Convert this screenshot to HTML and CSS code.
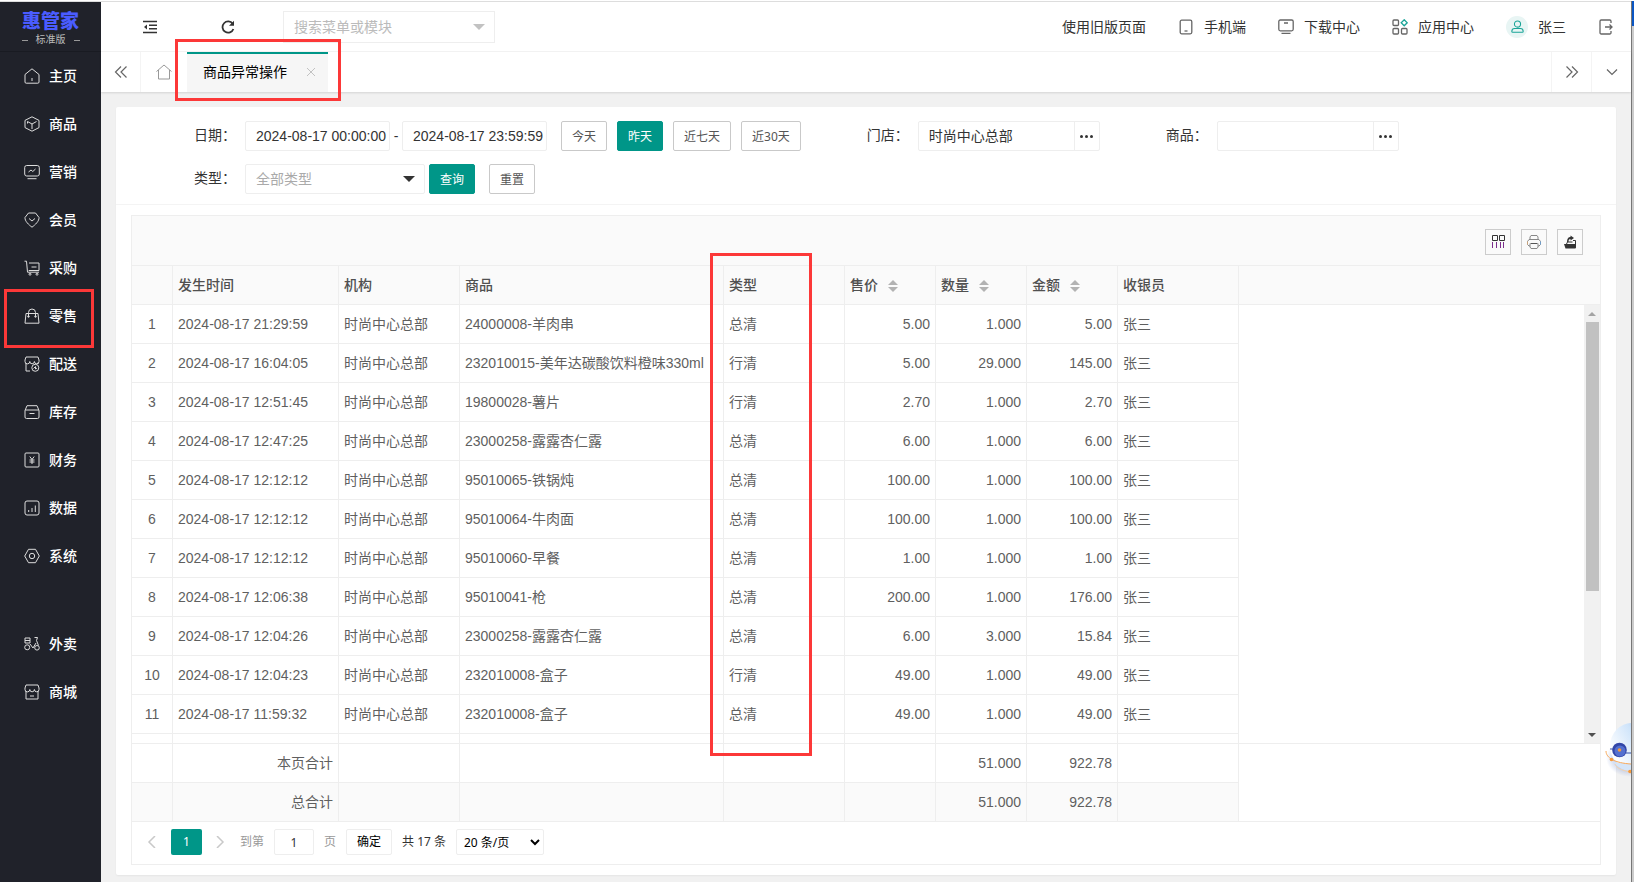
FILE: index.html
```html
<!DOCTYPE html>
<html lang="zh-CN">
<head>
<meta charset="utf-8">
<title>商品异常操作</title>
<link rel="stylesheet" href="styles.css">
</head>
<body>
<div class="app">
  <aside class="side">
    <div class="logo"><strong>惠管家</strong><span class="edition">标准版</span></div>
    <nav class="menu">
      <a href="#"><svg viewBox="0 0 16 16"><path d="M1 6.500 8 .8l7 5.700V14a1.200 1.200 0 0 1-1.200 1.200H2.200A1.200 1.200 0 0 1 1 14zM8 10v3"/></svg>主页</a>
      <a href="#"><svg viewBox="0 0 16 16"><path d="M8 .8 15 4.400v7.200L8 15.200 1 11.600V4.400zM3.500 5.500 8 8l4.500-2.500M8 8v5M3.500 5.500v2"/></svg>商品</a>
      <a href="#"><svg viewBox="0 0 16 16"><rect x=".7" y="1.500" width="14.600" height="10.500" rx="2"/><path d="m4.500 8 2.500-2 1.800 1.500L11.500 5M3.500 14.700h9"/></svg>营销</a>
      <a href="#"><svg viewBox="0 0 16 16"><path d="M4.500 1h7L15 5.500c.4 3.500-4 7.500-7 9.700C5 13 .6 9 1 5.500zM5 6.500 8 9l3-2.500"/></svg>会员</a>
      <a href="#"><svg viewBox="0 0 16 16"><path d="M.5 1.200h2l1 11h11.500M5 3h10v7.500H4.700M7.500 7h5"/><circle cx="6" cy="14.200" r="1"/><circle cx="13" cy="14.200" r="1"/></svg>采购</a>
      <a href="#" class="marked"><svg viewBox="0 0 16 16"><path d="M2 5.500h12l1 9.700H1zM4.500 9V4.500a3.500 3.500 0 0 1 7 0V9"/><circle cx="4.500" cy="8.500" r=".8"/><circle cx="11.500" cy="8.500" r=".8"/></svg>零售<span class="callout callout-menu"></span></a>
      <a href="#"><svg viewBox="0 0 16 16"><path d="M6 15H2V7M14 6.500v1.500M1 4l1-3h12l1 3v1.500a2.300 2.300 0 0 1-4.600 0 2.300 2.300 0 0 1-4.600 0A2.300 2.300 0 0 1 1 5.500z"/><circle cx="11.300" cy="11.800" r="3.500"/><path d="m9.500 12.500 2-2v2.500l1.500-1"/></svg>配送</a>
      <a href="#"><svg viewBox="0 0 16 16"><path d="M1 6.500 3 1.700h10l2 4.800v6.500a1.500 1.500 0 0 1-1.500 1.500h-11A1.500 1.500 0 0 1 1 13zM1 6h14M5.500 9.500h5"/></svg>库存</a>
      <a href="#"><svg viewBox="0 0 16 16"><rect x="1" y="1" width="14" height="14" rx="1"/><path d="m5.800 4.500 2.200 3 2.200-3M5.500 8h5M5.500 10h5M8 7.500v4.500"/></svg>财务</a>
      <a href="#"><svg viewBox="0 0 16 16"><rect x="1" y="1" width="14" height="14" rx="2"/><path d="M4.700 12v-2M8 12V8M11.300 12V5.500"/></svg>数据</a>
      <a href="#"><svg viewBox="0 0 16 16"><path d="M4.500 1.300h7L15.300 8l-3.800 6.700h-7L.7 8z"/><circle cx="8" cy="8" r="2.700"/></svg>系统</a>
      <a href="#" class="apart"><svg viewBox="0 0 16 16"><path d="M1 2h5v5H1zM1 4.500h5M10.500 1.500h3l-1 3 2 5M6 8l3 4 3-5"/><circle cx="3.200" cy="11.300" r="2.500"/><circle cx="13" cy="11.800" r="2.300"/></svg>外卖</a>
      <a href="#"><svg viewBox="0 0 16 16"><path d="M2 7v8h12V7M1 4l1-3h12l1 3v1.500a2.300 2.300 0 0 1-4.600 0 2.300 2.300 0 0 1-4.600 0A2.300 2.300 0 0 1 1 5.500zM6 12h4"/></svg>商城</a>
    </nav>
  </aside>

  <div class="page">
    <header class="top">
      <button class="plain fold" aria-label="收起菜单"><svg class="dark" viewBox="0 0 14 14"><path d="M0 1.500h14M6 5.200h8M6 8.800h8M0 12.500h14"/><path class="solid" d="M4 4.500v5L1 7z"/></svg></button>
      <button class="plain reload" aria-label="刷新"><svg class="dark" viewBox="0 0 14 14"><path stroke-width="1.800" d="M11.700 3.800A5.600 5.600 0 1 0 12.400 9"/><path class="solid" d="M13 .8v5H8z"/></svg></button>
      <label class="combo search"><input type="text" placeholder="搜索菜单或模块" aria-label="搜索菜单或模块"></label>
      <nav class="links">
        <a href="#">使用旧版页面</a>
        <a href="#"><svg class="line" viewBox="0 0 16 16"><rect x="2.200" y="1.200" width="11.600" height="13.600" rx="1.500"/><path d="M6.500 12h3"/></svg>手机端</a>
        <a href="#"><svg class="line" viewBox="0 0 16 16"><rect x=".8" y="1" width="14.400" height="10.800" rx="1.500"/><path d="M6 4h4M3.500 14.300h9"/></svg>下载中心</a>
        <a href="#"><svg class="line" viewBox="0 0 16 16"><rect x="1" y="1" width="5.500" height="5.500" rx="1"/><rect x="1" y="9.500" width="5.500" height="5.500" rx="1"/><rect x="9.500" y="9.500" width="5.500" height="5.500" rx="1"/><path class="teal" d="m12.200.8 3 3-3 3-3-3z"/></svg>应用中心</a>
        <a href="#" class="user"><span class="avatar"><svg class="line" viewBox="0 0 16 16"><g class="teal"><circle cx="8" cy="5" r="3.800"/><path d="M4.500 10.500h7c2.500 0 3.500 1.500 3.500 3.500 0 .7-.4 1-1 1H2c-.6 0-1-.3-1-1 0-2 1-3.500 3.500-3.500z"/></g></svg></span>张三</a>
        <a href="#" aria-label="退出"><svg class="line" viewBox="0 0 16 16"><path d="M13 4V2.200A1.200 1.200 0 0 0 11.800 1H3.200A1.200 1.200 0 0 0 2 2.200v11.600A1.200 1.200 0 0 0 3.200 15h8.600a1.200 1.200 0 0 0 1.200-1.200V12M7 8h7M11.500 5.500 14 8l-2.500 2.500"/></svg></a>
      </nav>
    </header>

    <div class="tabs">
      <button class="plain tab-prev" aria-label="向左"><svg class="line" viewBox="0 0 14 14"><path d="M7 1.500 1.500 7 7 12.500M12.500 1.500 7 7l5.500 5.500"/></svg></button>
      <a href="#" class="tab-home" aria-label="主页"><svg class="pale" viewBox="0 0 16 16"><path d="M.5 7.500 8 1l7.500 6.500M2.500 6v9h11V6"/></svg></a>
      <div class="tab"><a href="#">商品异常操作</a><button class="plain tab-close" aria-label="关闭"><svg viewBox="0 0 8 8"><path d="m0 0 8 8M8 0 0 8"/></svg></button><span class="callout callout-tab"></span></div>
      <button class="plain tab-next" aria-label="向右"><svg class="line" viewBox="0 0 14 14"><path d="M1.500 1.500 7 7l-5.500 5.500M7 1.500 12.500 7 7 12.500"/></svg></button>
      <button class="plain tab-more" aria-label="更多"><svg class="line" viewBox="0 0 14 14"><path d="M2 4.500 7 9.500l5-5"/></svg></button>
    </div>

    <main class="card">
      <form class="filters">
        <div class="row">
          <div class="field">
            <label for="from">日期：</label>
            <input id="from" class="date" type="text" value="2024-08-17 00:00:00">
            <span class="dash">-</span>
            <input class="date" type="text" value="2024-08-17 23:59:59" aria-label="结束日期">
            <div class="quick">
              <button type="button" class="btn">今天</button>
              <button type="button" class="btn primary">昨天</button>
              <button type="button" class="btn">近七天</button>
              <button type="button" class="btn">近30天</button>
            </div>
          </div>
          <div class="field">
            <label for="shop">门店：</label>
            <div class="picker"><input id="shop" type="text" value="时尚中心总部"><button type="button" aria-label="选择门店"><i></i><i></i><i></i></button></div>
          </div>
          <div class="field">
            <label for="goods">商品：</label>
            <div class="picker"><input id="goods" type="text"><button type="button" aria-label="选择商品"><i></i><i></i><i></i></button></div>
          </div>
        </div>
        <div class="row">
          <div class="field">
            <label for="kind">类型：</label>
            <span class="combo kind"><select id="kind"><option>全部类型</option></select></span>
            <button type="button" class="btn primary query">查询</button>
            <button type="reset" class="btn reset">重置</button>
          </div>
        </div>
      </form>

      <section class="sheet">
        <div class="tools">
          <button aria-label="筛选列"><svg viewBox="0 0 16 16"><path stroke="#333" d="M2.500 1.500h5v5h-5zM9.500 1.500h5v5h-5z"/><path stroke="#7b2d8b" d="M2.500 8v6M6.500 8v6M10.500 8v6M13.500 8v6"/></svg></button>
          <button aria-label="打印"><svg viewBox="0 0 16 16"><path stroke="#888" d="M4 5.500V3l1-1.500h6L12 3v2.500M4 12H3l-1.500-1.500v-3L3 5.500h10l1.500 2v3L13 12h-1"/><path stroke="#c9a37a" d="M1.500 7.500v3"/><path stroke="#6f9cc9" d="M14.500 7.500v3"/><path stroke="#555" d="M4.500 9.500h7"/><path stroke="#888" d="M4 9.500V13l1 1.500h6l1-1.500V9.500"/></svg></button>
          <button aria-label="导出"><svg viewBox="0 0 16 16"><path fill="#333" stroke="none" d="M2 10h12v3.500a1 1 0 0 1-1 1H3.500zM5 8C5 5 6 3 8.500 3V1.500L12 4 8.500 6.500V5C7 5 6.500 6 6.500 8z"/><path stroke="#333" d="M11 6.500h2.500V11M4.500 10l1-2h5"/></svg></button>
        </div>
        <div class="head">
          <table class="grid">
            <colgroup><col class="c-no"><col class="c-time"><col class="c-org"><col class="c-goods"><col class="c-kind"><col class="c-num"><col class="c-num"><col class="c-num"><col class="c-cashier"></colgroup>
            <thead><tr><th></th><th>发生时间</th><th>机构</th><th>商品</th><th>类型</th><th>售价<span class="sort"></span></th><th>数量<span class="sort"></span></th><th>金额<span class="sort"></span></th><th>收银员</th></tr></thead>
          </table>
        </div>
        <div class="body">
          <div class="rows">
          <table class="grid">
            <colgroup><col class="c-no"><col class="c-time"><col class="c-org"><col class="c-goods"><col class="c-kind"><col class="c-num"><col class="c-num"><col class="c-num"><col class="c-cashier"></colgroup>
            <tbody>
              <tr><td>1</td><td>2024-08-17 21:29:59</td><td>时尚中心总部</td><td>24000008-羊肉串</td><td>总清</td><td>5.00</td><td>1.000</td><td>5.00</td><td>张三</td></tr>
              <tr><td>2</td><td>2024-08-17 16:04:05</td><td>时尚中心总部</td><td>232010015-美年达碳酸饮料橙味330ml</td><td>行清</td><td>5.00</td><td>29.000</td><td>145.00</td><td>张三</td></tr>
              <tr><td>3</td><td>2024-08-17 12:51:45</td><td>时尚中心总部</td><td>19800028-薯片</td><td>行清</td><td>2.70</td><td>1.000</td><td>2.70</td><td>张三</td></tr>
              <tr><td>4</td><td>2024-08-17 12:47:25</td><td>时尚中心总部</td><td>23000258-露露杏仁露</td><td>总清</td><td>6.00</td><td>1.000</td><td>6.00</td><td>张三</td></tr>
              <tr><td>5</td><td>2024-08-17 12:12:12</td><td>时尚中心总部</td><td>95010065-铁锅炖</td><td>总清</td><td>100.00</td><td>1.000</td><td>100.00</td><td>张三</td></tr>
              <tr><td>6</td><td>2024-08-17 12:12:12</td><td>时尚中心总部</td><td>95010064-牛肉面</td><td>总清</td><td>100.00</td><td>1.000</td><td>100.00</td><td>张三</td></tr>
              <tr><td>7</td><td>2024-08-17 12:12:12</td><td>时尚中心总部</td><td>95010060-早餐</td><td>总清</td><td>1.00</td><td>1.000</td><td>1.00</td><td>张三</td></tr>
              <tr><td>8</td><td>2024-08-17 12:06:38</td><td>时尚中心总部</td><td>95010041-枪</td><td>总清</td><td>200.00</td><td>1.000</td><td>176.00</td><td>张三</td></tr>
              <tr><td>9</td><td>2024-08-17 12:04:26</td><td>时尚中心总部</td><td>23000258-露露杏仁露</td><td>总清</td><td>6.00</td><td>3.000</td><td>15.84</td><td>张三</td></tr>
              <tr><td>10</td><td>2024-08-17 12:04:23</td><td>时尚中心总部</td><td>232010008-盒子</td><td>行清</td><td>49.00</td><td>1.000</td><td>49.00</td><td>张三</td></tr>
              <tr><td>11</td><td>2024-08-17 11:59:32</td><td>时尚中心总部</td><td>232010008-盒子</td><td>总清</td><td>49.00</td><td>1.000</td><td>49.00</td><td>张三</td></tr>
              <tr><td></td><td></td><td></td><td></td><td></td><td></td><td></td><td></td><td></td></tr>
            </tbody>
          </table>
          </div>
          <div class="bar"><span class="up"></span><span class="thumb"></span><span class="rest"></span><span class="down"></span></div>
        </div>
        <div class="totals">
          <table class="grid">
            <colgroup><col class="c-no"><col class="c-time"><col class="c-org"><col class="c-goods"><col class="c-kind"><col class="c-num"><col class="c-num"><col class="c-num"><col class="c-cashier"></colgroup>
            <tbody>
              <tr><td></td><td>本页合计</td><td></td><td></td><td></td><td></td><td>51.000</td><td>922.78</td><td></td></tr>
              <tr><td></td><td>总合计</td><td></td><td></td><td></td><td></td><td>51.000</td><td>922.78</td><td></td></tr>
            </tbody>
          </table>
        </div>
        <div class="pager">
          <button class="plain" aria-label="上一页"><svg viewBox="0 0 12 12"><path d="M9 0 3 6l6 6"/></svg></button>
          <button class="current">1</button>
          <button class="plain" aria-label="下一页"><svg viewBox="0 0 12 12"><path d="m3 0 6 6-6 6"/></svg></button>
          <label for="goto">到第</label>
          <input id="goto" type="text" value="1">
          <span class="unit">页</span>
          <button class="ok">确定</button>
          <span class="count">共 17 条</span>
          <select aria-label="每页条数"><option>20 条/页</option></select>
        </div>
        <span class="callout callout-kind"></span>
      </section>
    </main>

    <svg class="robot" viewBox="0 0 28 60">
      <defs>
        <linearGradient id="shell" x1="1" y1="0" x2="0" y2=".6"><stop offset="0" stop-color="#7fb2ee"/><stop offset=".45" stop-color="#cfe4fa"/><stop offset="1" stop-color="#fff"/></linearGradient>
        <radialGradient id="shade"><stop offset=".6" stop-color="#8fa5d8" stop-opacity=".5"/><stop offset="1" stop-color="#8fa5d8" stop-opacity="0"/></radialGradient>
      </defs>
      <ellipse cx="27" cy="40" rx="24" ry="19" fill="url(#shade)"/>
      <ellipse cx="29" cy="28" rx="22" ry="23" fill="url(#shell)"/>
      <path d="M10 44q8 9 18 9v-7z" fill="#d5e5f8"/>
      <path d="M7 31h3M23 35h5" fill="none" stroke="#3450a8"/>
      <circle cx="16.500" cy="32" r="7.300" fill="#3246a8"/>
      <circle cx="17" cy="33" r="5.500" fill="#5470cf"/>
      <circle cx="16.500" cy="32" r="1.800" fill="#f79b3c"/>
      <path d="M3 33c0 7 9 12 25 13" fill="none" stroke="#f8a95a"/>
      <path d="M12 46c1 4 8 7 16 8" fill="none" stroke="#f3d3b0"/>
      <circle cx="8.500" cy="41.500" r="1.800" fill="#f79b3c"/><circle cx="27" cy="53.500" r="1.800" fill="#f79b3c"/>
    </svg>
  </div>
  <div class="edge"></div>
</div>
</body>
</html>
```
FILE: styles.css
```css
* { box-sizing: border-box; }

body {
  margin: 0;
  color: #333;
  background: #f1f1f1;
  font: 14px/20px "Liberation Sans", "Noto Sans CJK SC", sans-serif;
}

a { color: inherit; text-decoration: none; }
button, input, select { font: inherit; color: inherit; margin: 0; padding: 0; }
input { min-width: 0; outline: none; }
svg { display: block; flex: none; width: 16px; height: 16px; fill: none; stroke: currentColor; }
.plain { display: flex; align-items: center; justify-content: center; border: 0; background: none; }

.app {
  display: grid;
  grid-template-columns: 101px minmax(0, 1fr) 3px;
  grid-template-rows: minmax(0, 1fr);
  height: 100vh;
  min-height: 720px;
  border-top: 1px solid #fff;
}

/* Sidebar */
.side { border-top: 1px solid #ddd; background: #20222a; color: #fff; }
.logo {
  display: flex;
  flex-direction: column;
  align-items: center;
  height: 50px;
  padding-top: 9px;
  border-bottom: 1px solid #191b22;
}
.logo strong { color: #4a5cff; font-size: 19px; line-height: 22px; font-weight: 900; }
.edition { display: flex; align-items: center; gap: 8px; color: #bbb; font-size: 10px; line-height: 14px; }
.edition::before, .edition::after { content: ""; width: 6px; height: 1px; background: #999; }
.menu a {
  position: relative;
  display: flex;
  align-items: center;
  gap: 9px;
  height: 48px;
  padding-left: 24px;
  font-weight: 500;
}
.menu .apart { margin-top: 40px; }
.menu svg { stroke: #ddd; }

/* Annotation frames */
.callout { position: absolute; border: 3px solid #fc3838; pointer-events: none; z-index: 2; }
.callout-menu { inset: -3px 7px -8px 4px; }
.callout-tab { inset: -15px -13px -9px -12px; }
.callout-kind { top: 37px; bottom: 108px; left: 578px; width: 102px; }

/* Header */
.page { position: relative; display: flex; flex-direction: column; min-width: 0; border-top: 1px solid #ddd; }
.top { display: flex; align-items: center; flex: none; height: 50px; padding: 0 17px 0 41px; background: #fff; border-bottom: 1px solid #f4f4f4; }
.top .plain svg { width: 14px; height: 14px; }
.dark { stroke: #333; stroke-width: 1.4px; }
.solid { fill: #333; stroke: none; }
.fold { width: 16px; }
.reload { width: 16px; margin-left: 62px; }
.search { width: 212px; margin-left: 47px; }
.combo { position: relative; display: block; }
.combo::after {
  content: "";
  position: absolute;
  top: 13px;
  right: 10px;
  border: 6px solid transparent;
  border-top-color: #c2c2c2;
  border-bottom: 0;
  pointer-events: none;
}
.search input { display: block; width: 100%; height: 32px; padding: 0 10px; border: 1px solid #eee; background: #fff; }
.search input::placeholder { color: #bbb; }
.links { display: flex; align-items: center; gap: 32px; margin-left: auto; }
.links a { display: flex; align-items: center; gap: 10px; }
.line { stroke: #666; stroke-width: 1.3px; }
.teal { stroke: #19a497; }
.avatar { display: flex; align-items: center; justify-content: center; width: 22px; height: 22px; border-radius: 50%; background: #e8f5f4; }
.avatar svg { width: 13px; height: 13px; }

/* Page tabs */
.tabs { display: flex; flex: none; height: 40px; background: #fff; box-shadow: 0 1px 2px rgba(0, 0, 0, .12); }
.tabs .line { width: 14px; height: 14px; stroke-width: 1.2px; }
.tab-prev { width: 40px; border-right: 1px solid #f4f4f4; }
.tab-home { display: flex; align-items: center; justify-content: center; width: 46px; }
.pale { stroke: #999; }
.tab {
  position: relative;
  display: flex;
  align-items: center;
  gap: 20px;
  padding: 0 13px 2px 16px;
  background: #f6f6f6;
  border-top: 2px solid #009688;
  color: #000;
}
.tab-close { width: 8px; }
.tab-close svg { width: 8px; height: 8px; stroke: #c2c2c2; }
.tab-next { width: 40px; margin-left: auto; border-left: 1px solid #f4f4f4; }
.tab-more { width: 40px; border-left: 1px solid #f4f4f4; }

/* Filters */
.card { display: flex; flex: 1; flex-direction: column; min-height: 0; margin: 15px 15px 7px; background: #fff; border-radius: 2px; box-shadow: 0 1px 2px rgba(0, 0, 0, .05); }
.filters { display: flex; flex: none; flex-direction: column; gap: 13px; padding: 14px 15px 10px 78px; border-bottom: 1px solid #f4f4f4; }
.row { display: flex; gap: 66px; }
.field { display: flex; height: 30px; }
.field > label { width: 51px; line-height: 28px; white-space: nowrap; }
.date { width: 145px; padding: 0 0 0 10px; border: 1px solid #eee; border-radius: 2px; background: #fff; }
.dash { width: 12px; line-height: 30px; text-align: center; }
.quick { display: flex; gap: 10px; margin-left: 14px; }
.btn {
  height: 30px;
  padding: 2px 10px 0;
  border: 1px solid #c9c9c9;
  border-radius: 2px;
  background: #fff;
  color: #555;
  font: 12px/26px "Noto Sans", "Noto Sans CJK SC", sans-serif;
  white-space: nowrap;
}
.primary { border-color: #009688; background: #009688; color: #fff; }
.picker { display: flex; width: 182px; border: 1px solid #eee; border-radius: 2px; }
.picker input { flex: 1; padding: 0 10px; border: 0; background: none; }
.picker button { display: flex; align-items: center; justify-content: center; gap: 2px; width: 25px; border: 0; border-left: 1px solid #eee; background: none; }
.picker i { width: 3px; height: 3px; border-radius: 50%; background: #333; }
.kind { width: 180px; }
.kind select { width: 100%; height: 30px; padding: 0 10px; border: 1px solid #eee; border-radius: 2px; appearance: none; background: #fff; color: #aaa; }
.kind::after { top: 12px; border-top-color: #333; }
.query { margin-left: 4px; }
.reset { margin-left: 14px; }

/* Table */
.sheet { position: relative; display: flex; flex: 1; flex-direction: column; min-height: 0; margin: 10px 15px; border: 1px solid #eee; }
.tools { display: flex; flex: none; align-items: center; justify-content: flex-end; gap: 10px; height: 50px; padding: 2px 17px 0; border-bottom: 1px solid #eee; background: #fafafa; }
.tools button { display: flex; align-items: center; justify-content: center; width: 26px; height: 26px; border: 1px solid #ccc; background: none; }
.head { flex: none; background: #fafafa; border-bottom: 1px solid #eee; }
.grid { width: 1107px; table-layout: fixed; border-collapse: separate; border-spacing: 0; color: #5f5f5f; }
.c-no { width: 41px; }
.c-time { width: 166px; }
.c-org, .c-kind, .c-cashier { width: 121px; }
.c-goods { width: 264px; }
.c-num { width: 91px; }
.grid th, .grid td { height: 39px; padding: 0 5px; border-right: 1px solid #eee; border-bottom: 1px solid #eee; text-align: left; white-space: nowrap; }
.grid th { height: 38px; border-bottom: 0; color: #505050; font-weight: 500; }
.grid td:first-child { text-align: center; }
.grid td:nth-child(6), .grid td:nth-child(7), .grid td:nth-child(8) { text-align: right; }
.sort { display: inline-flex; flex-direction: column; gap: 2px; margin-left: 10px; vertical-align: middle; }
.sort::before, .sort::after { content: ""; border: 5px solid transparent; }
.sort::before { border-top: 0; border-bottom-color: #b2b2b2; }
.sort::after { border-bottom: 0; border-top-color: #b2b2b2; }
.body { display: flex; flex: 1; min-height: 0; }
.rows { flex: 1; overflow: hidden; }
.bar { display: flex; flex-direction: column; align-items: center; width: 16px; background: #f1f1f1; }
.up, .down { flex: none; margin: 7px 0 6px; border: 4px solid transparent; }
.up { border-top: 0; border-bottom-color: #a3a3a3; }
.down { border-bottom: 0; border-top-color: #505050; }
.thumb { flex: 269; width: 13px; background: #c1c1c1; }
.rest { flex: 135; }
.totals { flex: none; border-top: 1px solid #eee; }
.totals td:nth-child(2) { text-align: right; }
.totals tr:last-child td { height: 38px; border-bottom: 0; background: #fafafa; }

/* Pager */
.pager {
  display: flex;
  flex: none;
  align-items: center;
  height: 43px;
  padding: 0 0 2px 14px;
  border-top: 1px solid #eee;
  font: 12px/16px "Noto Sans", "Noto Sans CJK SC", sans-serif;
}
.pager .plain { width: 12px; }
.pager svg { width: 12px; height: 12px; stroke: #c9c9c9; stroke-width: 1.5px; }
.pager .current { width: 31px; height: 26px; margin: 0 12px 0 13px; border: 0; border-radius: 2px; background: #009688; color: #fff; }
.pager label { margin: 0 10px 0 14px; color: #999; }
.pager input { width: 40px; height: 26px; border: 1px solid #eee; border-radius: 2px; text-align: center; }
.unit { margin: 0 10px; color: #999; }
.ok { width: 46px; height: 26px; border: 1px solid #eee; border-radius: 2px; background: #fff; color: #000; }
.count { margin: 0 10px; }
.pager select { width: 88px; height: 26px; padding-left: 3px; border: 1px solid #eee; border-radius: 2px; background: #fff; color: #000; }

.robot { position: absolute; right: 0; bottom: 104px; width: 28px; height: 60px; stroke: none; }

.edge { border-left: 1px solid #777; background: linear-gradient(#0a56c4 25px, #ccc 25px); }
```
